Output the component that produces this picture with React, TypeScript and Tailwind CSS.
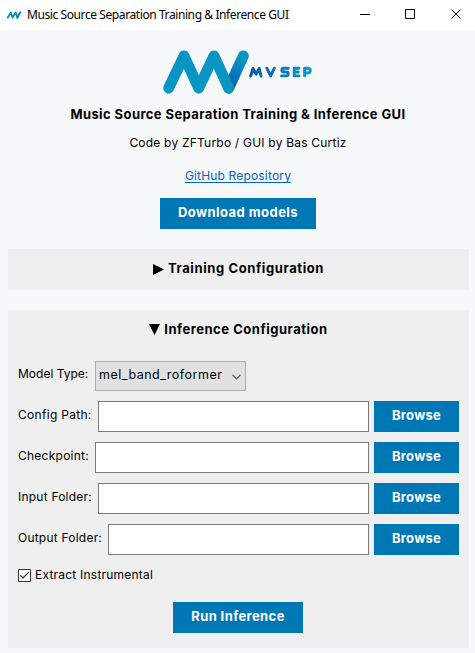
import React from "react";

const buttonBase =
  "flex h-[31px] items-center justify-center bg-[#0077b5] pb-px text-[13px] font-bold text-white whitespace-nowrap";

function AppIcon() {
  return (
    <svg width="16" height="16" viewBox="0 0 16 16" fill="none" strokeLinecap="round" strokeLinejoin="round">
      <path d="M1.8 10.6 4.9 5.6 6.7 10.6 9.7 5.6 11.4 10.6" stroke="#0694c4" strokeWidth="1.9" />
      <path d="M11.4 10.6 14.2 5.4" stroke="#0b7bbb" strokeWidth="1.9" />
    </svg>
  );
}

function Logo() {
  return (
    <svg width="152" height="46" viewBox="0 0 152 46" fill="none" strokeLinecap="round" strokeLinejoin="round">
      <defs>
        <linearGradient id="stem" x1="72" y1="35" x2="82" y2="9" gradientUnits="userSpaceOnUse">
          <stop stopColor="#0761ad" />
          <stop offset="0.5" stopColor="#087fbe" />
          <stop offset="1" stopColor="#0895c4" />
        </linearGradient>
        <linearGradient id="word" x1="86" y1="0" x2="149" y2="0" gradientUnits="userSpaceOnUse">
          <stop stopColor="#0757a6" />
          <stop offset="0.45" stopColor="#0872b6" />
          <stop offset="1" stopColor="#0a9cc8" />
        </linearGradient>
      </defs>
      <path d="M66.7 38 81.3 6" stroke="url(#stem)" strokeWidth="11" />
      <path d="M6.7 38 22 6 36.7 38 52 6 66.7 38" stroke="#0895c4" strokeWidth="11" />
      <g stroke="url(#word)" strokeWidth="2.9">
        <path d="M88.7 26 91 18.4 94.2 24.2 97.2 18.4 99 26" />
        <path d="M104.8 18.2 108.6 25.8 112.4 18.2" />
        <path d="M126.3 18.2H122Q119.8 18.2 119.8 20.1T122 22H124Q126.3 22 126.3 24T124 25.9H119.6" />
        <path d="M137 18.2H132.2V25.9H137M132.5 22H136.4" />
        <path d="M142.6 25.9V18.2H146Q148.3 18.4 148.3 20.6T146 23H143" />
      </g>
    </svg>
  );
}

function PathRow({ label, labelClass }: { label: string; labelClass: string }) {
  return (
    <div className="flex h-[31px] items-center">
      <label className={`${labelClass} shrink-0 pb-[3px] text-[12px] whitespace-nowrap`}>{label}</label>
      <input className="h-[31px] min-w-0 flex-1 border border-[#7a7a7a] bg-white px-1 outline-none" />
      <button className={`${buttonBase} ml-[5px] w-[85px] tracking-[0.3px]`}>Browse</button>
    </div>
  );
}

export default function App() {
  return (
    <div className="flex h-[653px] w-[475px] flex-col overflow-hidden bg-[#f7f8fa] font-['Inter',sans-serif] text-[13px] text-black">
      <header className="flex h-[30px] shrink-0 items-center bg-white pl-[6px]">
        <AppIcon />
        <span className="ml-[5px] flex-1 font-['Noto_Sans',sans-serif] text-[12px] tracking-[-0.41px] whitespace-nowrap">
          Music Source Separation Training &amp; Inference GUI
        </span>
        <svg width="115" height="30" viewBox="360 0 115 30" fill="none" stroke="#000">
          <path d="M360 14.5h10" />
          <path d="M405.5 9.5h9v9h-9z" />
          <path d="M451.5 9.5l9 9M460.5 9.5l-9 9" />
        </svg>
      </header>
      <main className="flex flex-1 flex-col pr-[6px] pl-2">
        <section className="flex h-[219px] flex-col items-center pr-px">
          <div className="mt-[20px] h-[46px]"><Logo /></div>
          <h1 className="mt-[8px] h-5 text-[13px] leading-5 font-bold tracking-[0.41px] whitespace-nowrap">
            Music Source Separation Training &amp; Inference GUI
          </h1>
          <p className="mt-[9px] h-5 text-[12px] leading-5 tracking-[0.21px] whitespace-nowrap">Code by ZFTurbo / GUI by Bas Curtiz</p>
          <a className="mt-[13px] h-5 text-[12px] leading-5 tracking-[0.17px] whitespace-nowrap text-[#0066cc] underline underline-offset-2">GitHub Repository</a>
          <button className={`${buttonBase} mt-[12px] w-[156px] tracking-[0.45px]`}>Download models</button>
        </section>
        <section className="flex h-[41px] items-center justify-center gap-[4px] bg-[#efefef] pb-px font-bold">
          <svg width="11" height="11" viewBox="0 0 11 11"><path d="M0 0 11 5.5 0 11z" /></svg>
          <h2 className="tracking-[0.6px] whitespace-nowrap">Training Configuration</h2>
        </section>
        <section className="mt-5 flex h-[338px] flex-col bg-[#efefef] px-[10px]">
          <div className="flex h-[39px] items-center justify-center gap-[4px] font-bold">
            <svg width="11" height="11" viewBox="0 0 11 11"><path d="M0 0H11L5.5 11z" /></svg>
            <h2 className="tracking-[0.52px] whitespace-nowrap">Inference Configuration</h2>
          </div>
          <div className="mt-3 flex h-[30px] items-center">
            <label className="w-[77px] pb-1 text-[12px] whitespace-nowrap">Model Type:</label>
            <div className="flex h-[30px] w-[151px] items-center justify-between border border-[#adadad] bg-[#e1e1e1] pr-1 pl-[3px]">
              <span className="pb-px text-[12.5px] tracking-[0.5px] whitespace-nowrap">mel_band_roformer</span>
              <svg className="mt-[2px]" width="9" height="6" viewBox="0 0 9 6" fill="none" stroke="#505050" strokeWidth="1.2"><path d="M.5 .8 4.5 4.8 8.5 .8" /></svg>
            </div>
          </div>
          <div className="mt-[10px] flex flex-col gap-[10px]">
            <PathRow label="Config Path:" labelClass="w-[80px] tracking-[0.3px]" />
            <PathRow label="Checkpoint:" labelClass="w-[77px] tracking-[0.25px]" />
            <PathRow label="Input Folder:" labelClass="w-[80px] tracking-[0.22px]" />
            <PathRow label="Output Folder:" labelClass="w-[90px] tracking-[0.22px]" />
          </div>
          <label className="mt-[13px] flex h-[15px] items-center gap-1">
            <svg width="13" height="13" viewBox="0 0 13 13" fill="none">
              <path d="M.5 .5h12v12H.5z" fill="#fff" stroke="#333" />
              <path d="M2.3 6.3 5 9 10.7 3.3" stroke="#222" strokeWidth="1.2" />
            </svg>
            <span className="pb-px text-[12px] tracking-[0.22px] whitespace-nowrap">Extract Instrumental</span>
          </label>
          <button className={`${buttonBase} mt-[19px] mr-px w-[130px] self-center tracking-[0.4px]`}>Run Inference</button>
        </section>
      </main>
    </div>
  );
}
